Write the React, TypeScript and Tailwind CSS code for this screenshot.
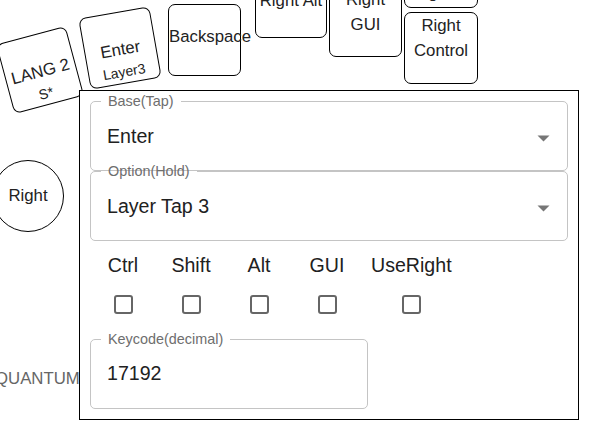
import React from "react";

const font = { fontFamily: '"Liberation Sans", Arial, sans-serif' };

function Arrow() {
  return (
    <svg width="13" height="7" viewBox="0 0 13 7" className="absolute right-[18px] top-[34px]">
      <polygon points="0.5,0.5 12.5,0.5 6.5,6.5" fill="#767676" />
    </svg>
  );
}

function Field({
  label,
  value,
  select,
  className,
}: {
  label: string;
  value: string;
  select?: boolean;
  className?: string;
}) {
  return (
    <div className={"relative h-[70px] flex items-center pl-[17px] " + (className ?? "")}>
      <fieldset className="absolute left-0 right-0 top-[-8px] bottom-0 border border-[#c4c4c4] rounded-[5px] min-w-0 pointer-events-none">
        <legend className="ml-[10px] px-[7px] text-[14.4px] leading-[17px] text-[#6e6e6e]">{label}</legend>
      </fieldset>
      <span className="relative text-[19.6px] leading-[23px] text-[#212121]">{value}</span>
      {select && <Arrow />}
    </div>
  );
}

function Check({ label, className }: { label: string; className?: string }) {
  return (
    <div className={"flex flex-col items-center min-w-[50px] " + (className ?? "")}>
      <span className="text-[19.6px] leading-[28.8px] text-[#212121] whitespace-nowrap">{label}</span>
      <div className="mt-[15px] w-[19px] h-[19px] border-2 border-[#666] rounded-[3px]" />
    </div>
  );
}

export default function App() {
  return (
    <div className="relative w-[602px] h-[427px] overflow-hidden bg-white" style={font}>
      {/* keyboard keys (free canvas) */}
      <div className="absolute left-[4px] top-[34px] w-[72px] h-[72px] rotate-[-15deg] border border-black rounded-[7px] bg-white text-center text-[#222] pt-[24px]">
        <div className="text-[16.8px] leading-[25.2px]">LANG 2</div>
        <div className="text-[14px] leading-[20px]">S*</div>
      </div>
      <div className="absolute left-[84px] top-[12px] w-[72px] h-[72px] rotate-[-10deg] border border-black rounded-[7px] bg-white text-center text-[#222] pt-[24px]">
        <div className="text-[16.8px] leading-[25.2px]">Enter</div>
        <div className="text-[14px] leading-[20px]">Layer3</div>
      </div>
      <div className="absolute left-[168px] top-[4px] w-[73px] h-[72px] border border-black rounded-[7px] text-center text-[#222] pt-[19px]">
        <div className="text-[16.8px] leading-[25.2px] whitespace-nowrap">Backspace</div>
      </div>
      <div className="absolute left-[255px] top-[-34px] w-[72px] h-[72px] border border-black rounded-[7px] bg-white text-center text-[#222] pt-[21px]">
        <div className="text-[16.8px] leading-[25.2px] whitespace-nowrap">Right Alt</div>
      </div>
      <div className="absolute left-[329px] top-[-15px] w-[73px] h-[72px] border border-black rounded-[7px] bg-white text-center text-[#222] pt-[1px]">
        <div className="text-[16.8px] leading-[25.2px]">Right</div>
        <div className="text-[16.8px] leading-[25.2px]">GUI</div>
      </div>
      <div className="absolute left-[404px] top-[-64px] w-[74px] h-[72px] border border-black rounded-[7px] bg-white text-center text-[#222] pt-[43px] pr-[18px]">
        <div className="text-[16.8px] leading-[25.2px]">Right</div>
      </div>
      <div className="absolute left-[404px] top-[12px] w-[74px] h-[72px] border border-black rounded-[7px] bg-white text-center text-[#222] pt-[0px]">
        <div className="text-[16.8px] leading-[25.2px]">Right</div>
        <div className="text-[16.8px] leading-[25.2px]">Control</div>
      </div>
      <div className="absolute left-[-8px] top-[160px] w-[72px] h-[72px] rounded-full border border-black bg-white flex items-center justify-center text-[#222]">
        <span className="text-[16.8px] leading-[25.2px]">Right</span>
      </div>
      <div className="absolute left-[-5px] top-[366px] text-[16.8px] leading-[25.2px] text-[#666] whitespace-nowrap">
        QUANTUM
      </div>

      {/* popover panel */}
      <div className="absolute left-[79px] top-[90px] w-[500px] h-[330px] border border-black bg-white p-[10px] flex flex-col">
        <Field label="Base(Tap)" value="Enter" select />
        <Field label="Option(Hold)" value="Layer Tap 3" select />
        <div className="flex gap-[18px] ml-[8px] mt-[10px]">
          <Check label="Ctrl" />
          <Check label="Shift" />
          <Check label="Alt" />
          <Check label="GUI" />
          <Check label="UseRight" className="ml-[1px]" />
        </div>
        <Field label="Keycode(decimal)" value="17192" className="w-[278px] mt-[25px]" />
      </div>
    </div>
  );
}
